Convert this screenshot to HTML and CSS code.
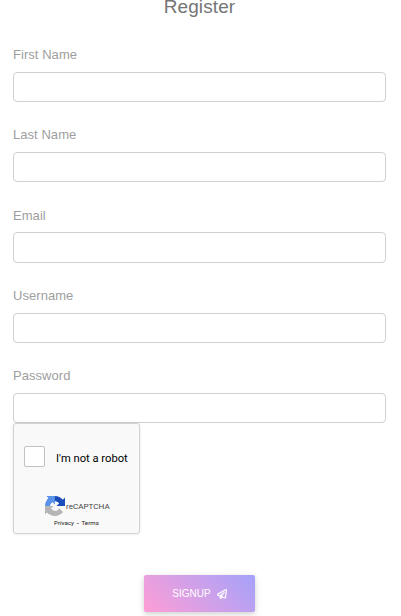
FILE: index.html
```html
<!DOCTYPE html>
<html lang="en">
<head>
    <meta charset="UTF-8">
    <meta name="viewport" content="width=device-width, initial-scale=1.0">
    <title>Register</title>
    <link rel="stylesheet" href="styles.css">
</head>
<body>
    <form class="register">
        <h1 class="title">Register</h1>
        <div class="field">
            <label for="first-name">First Name</label>
            <input type="text" id="first-name">
        </div>
        <div class="field">
            <label for="last-name">Last Name</label>
            <input type="text" id="last-name">
        </div>
        <div class="field">
            <label for="email">Email</label>
            <input type="email" id="email">
        </div>
        <div class="field">
            <label for="username">Username</label>
            <input type="text" id="username">
        </div>
        <div class="field">
            <label for="password">Password</label>
            <input type="password" id="password">
        </div>
        <!-- captcha -->
        <div class="captcha">
            <div class="captcha-check">
                <span class="checkbox"></span>
                <span>I'm not a robot</span>
            </div>
            <div class="captcha-brand">
                <svg class="captcha-logo" viewBox="0 0 64 64">
                    <path fill="#1c4cb9" d="M64 31.955l-.033-1.370V4.687l-7.160 7.160C50.948 4.674 42.033.093 32.050.093c-10.400 0-19.622 4.960-25.458 12.640l11.736 11.860a15.550 15.550 0 0 1 4.754-5.334c2.050-1.600 4.952-2.906 8.968-2.906.485 0 .860.057 1.135.163 4.976.393 9.288 3.140 11.828 7.124l-8.307 8.307L64 31.953"/>
                    <path fill="#5b93ea" d="M31.862.094l-1.370.033H4.594l7.160 7.160C4.580 13.147 0 22.060 0 32.046c0 10.400 4.960 19.622 12.640 25.458L24.500 45.768a15.550 15.550 0 0 1-5.334-4.754c-1.600-2.050-2.906-4.952-2.906-8.968 0-.485.057-.860.163-1.135.393-4.976 3.140-9.288 7.124-11.828l8.307 8.307L31.860.095"/>
                    <path fill="#b5b5b5" d="M.001 32.045l.033 1.370v25.898l7.160-7.160c5.860 7.173 14.774 11.754 24.760 11.754 10.400 0 19.622-4.960 25.458-12.640l-11.736-11.860a15.550 15.550 0 0 1-4.754 5.334c-2.050 1.600-4.952 2.906-8.968 2.906-.485 0-.860-.057-1.135-.163-4.976-.393-9.288-3.140-11.828-7.124l8.307-8.307L.001 32.045"/>
                </svg>
                <span>reCAPTCHA</span>
            </div>
            <div class="captcha-links">
                <span>Privacy</span><span class="sep">-</span><span>Terms</span>
            </div>
        </div>
        <button type="button" class="signup">
            SIGNUP
            <svg class="plane" viewBox="0 0 512 512">
                <path fill="currentColor" stroke="currentColor" stroke-width="16" d="M440 6.500L24 246.400c-34.400 19.900-31.100 70.800 5.700 85.900L144 379.600V464c0 46.400 59.200 65.500 86.600 28.600l43.800-59.100 111.900 46.200c5.900 2.400 12.100 3.600 18.300 3.600 8.200 0 16.300-2.100 23.600-6.200 12.800-7.200 21.600-20 23.900-34.500l59.400-387.200c6.100-40.100-36.900-68.800-71.500-48.900zM192 464v-64.600l36.600 15.100L192 464zm212.600-28.700l-153.800-63.500L391 169.500c10.700-15.500-9.500-33.500-23.700-21.200L155.800 332.600 48 288 464 48l-59.400 387.300z"/>
            </svg>
        </button>
    </form>
</body>
</html>
```
FILE: styles.css
```css
*{
    box-sizing: border-box;
    margin: 0;
    padding: 0;
}
body{
    height: 616px;
    overflow: hidden;
    background-color: #fff;
    font-family: "Liberation Sans", Arial, sans-serif;
}
.register{
    display: flex;
    flex-direction: column;
    width: 373px;
    margin-left: 13px;
}
.title{
    height: 45px;
    margin-top: -5px;
    font-size: 19px;
    font-weight: normal;
    line-height: 24px;
    letter-spacing: .1px;
    text-align: center;
    color: #757575;
}
.field{
    display: flex;
    flex-direction: column;
    height: 80.25px;
    padding-top: 5px;
}
.field label{
    height: 26.9px;
    font-size: 13px;
    line-height: 20px;
    letter-spacing: .05px;
    color: #9e9e9e;
}
.field input{
    height: 30.2px;
    border: 1px solid #ced0d2;
    border-radius: 4px;
    background-color: #fff;
}
.captcha{
    width: 127px;
    height: 111px;
    margin-top: -18px;
    border: 1px solid #d3d3d3;
    border-radius: 3px;
    background-color: #f9f9f9;
    box-shadow: 0 0 3px rgba(0, 0, 0, .1);
    font-family: Roboto, sans-serif;
    color: #000;
}
.captcha-check{
    display: flex;
    align-items: center;
    gap: 11px;
    padding: 22px 0 0 10px;
    font-size: 11.2px;
    white-space: nowrap;
}
.captcha-check span:last-child{
    padding-top: 4px;
}
.checkbox{
    width: 21px;
    height: 21px;
    border: 1px solid #c1c1c1;
    border-radius: 2px;
    background-color: #fff;
}
.captcha-brand{
    display: flex;
    align-items: center;
    gap: 1px;
    margin: 29px 0 0 31px;
    font-size: 8.1px;
    color: #444;
}
.captcha-logo{
    width: 20px;
    height: 20px;
}
.captcha-links{
    display: flex;
    padding: 3px 0 0 40px;
    font-size: 6.2px;
    line-height: 8px;
    color: #222;
}
.sep{
    margin: 0 2.5px;
    font-weight: bold;
}
.signup{
    display: flex;
    align-items: center;
    justify-content: center;
    gap: 6px;
    align-self: center;
    width: 111px;
    height: 37px;
    margin-top: 41px;
    border: 0;
    border-radius: 2px;
    background: linear-gradient(45deg, #ff9ed5 0%, #a5a2fb 100%);
    box-shadow: 0 2px 5px rgba(0, 0, 0, .12), 0 2px 8px rgba(0, 0, 0, .08);
    font-family: inherit;
    font-size: 10px;
    color: #fff;
}
.plane{
    width: 10px;
    height: 10px;
}
```
